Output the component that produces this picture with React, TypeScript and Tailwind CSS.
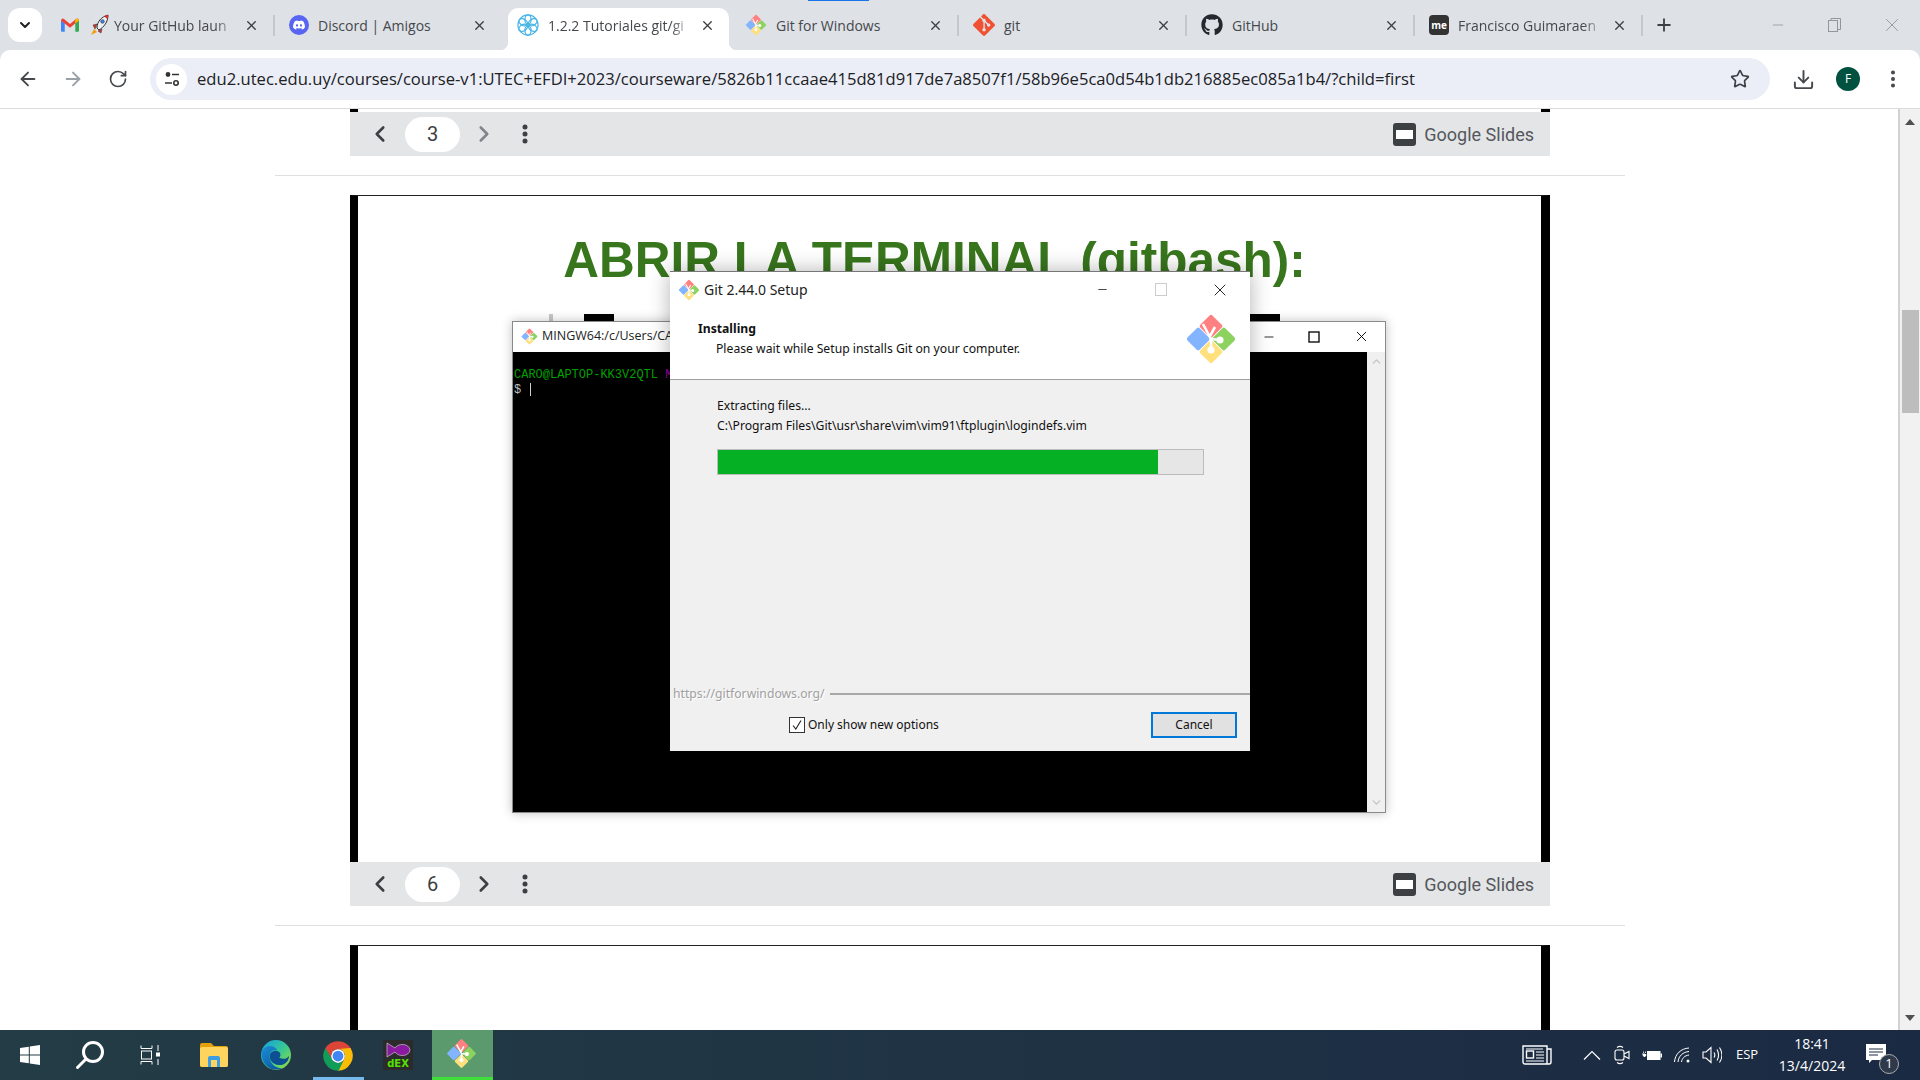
import React from 'react';
import { ArrowLeft, ArrowRight, ChevronDown, ChevronLeft, ChevronRight, ChevronUp, Download, EllipsisVertical, Minus, Plus, RotateCw, Star, X } from 'lucide-react';
import { FaDiscord, FaGithub } from 'react-icons/fa';
import { SiGit } from 'react-icons/si';

const GitLogo: React.FC<{ size: number }> = ({ size }) => (
  <svg width={size} height={size} viewBox="-26 -26 52 52" className="shrink-0">
    <rect x="-8.6" y="-8.6" width="17.2" height="17.2" rx="2" transform="translate(-12.8 0) rotate(45)" fill="#82b4ff" />
    <rect x="-8.6" y="-8.6" width="17.2" height="17.2" rx="2" transform="translate(0 -12.8) rotate(45)" fill="#ff8080" />
    <rect x="-8.6" y="-8.6" width="17.2" height="17.2" rx="2" transform="translate(12.8 0) rotate(45)" fill="#8cd25f" />
    <rect x="-8.6" y="-8.6" width="17.2" height="17.2" rx="2" transform="translate(0 12.8) rotate(45)" fill="#ffe07c" />
    <path d="M-8 -15 L0 0 M0 0 L0 11 M0 0 L9 1 M4 -12 L-1 -3" stroke="#fff" strokeWidth="2.6" fill="none" />
    <circle cx="0" cy="11" r="3.6" fill="#fff" />
    <circle cx="9" cy="1" r="3.6" fill="#fff" />
  </svg>
);

const GmailIcon = () => (
  <svg width="18" height="14" viewBox="0 0 24 18" className="shrink-0">
    <path d="M0 3 L5 6 V18 H1.5 A1.5 1.5 0 0 1 0 16.5Z" fill="#4285f4" />
    <path d="M24 3 L19 6 V18 H22.5 A1.5 1.5 0 0 0 24 16.5Z" fill="#34a853" />
    <path d="M0 3 A2.5 2.5 0 0 1 4 1 L12 7.5 L20 1 A2.5 2.5 0 0 1 24 3 L19 7 L12 12.5 L5 7Z" fill="#ea4335" />
    <path d="M19 2.8 L20 1 A2.5 2.5 0 0 1 24 3 L19 7Z" fill="#fbbc04" />
  </svg>
);

const RocketIcon = () => (
  <svg width="20" height="22" viewBox="0 0 20 22" className="shrink-0">
    <path d="M4 15 L1 21 L7 18Z" fill="#f59e0b" />
    <path d="M7 14 C7 8 11 3 18 1 C18 8 14 13 9 16Z" fill="#eef1f4" stroke="#333" strokeWidth="1" />
    <path d="M14 2 C15.5 1.5 17 1 18 1 C18 2.5 17.6 4 17.2 5Z" fill="#d93025" />
    <circle cx="12.5" cy="7.5" r="1.8" fill="#3b82f6" stroke="#333" strokeWidth="0.6" />
    <path d="M7 10 L3 11 L5 15Z M12 15 L11 19 L8 17Z" fill="#d93025" stroke="#333" strokeWidth="0.5" />
  </svg>
);

const SnowflakeIcon = () => (
  <svg width="22" height="22" viewBox="-12 -12 24 24" className="shrink-0">
    <circle r="11" fill="none" stroke="#45b4e6" strokeWidth="1.2" />
    {[0, 60, 120, 180, 240, 300].map(a => (
      <ellipse key={a} cx="0" cy="-6" rx="3.4" ry="5" transform={`rotate(${a})`} fill="none" stroke="#45b4e6" strokeWidth="1.4" />
    ))}
  </svg>
);

const ChromeIcon = () => (
  <svg width="30" height="30" viewBox="0 0 48 48">
    <path d="M45.05 13A24 24 0 0 0 2.95 13L14.47 29.5A11 11 0 0 1 24 13Z" fill="#db4437" />
    <path d="M45.05 13A24 24 0 0 0 2.95 13L14.47 29.5A11 11 0 0 1 24 13Z" fill="#fbbc05" transform="rotate(120 24 24)" />
    <path d="M45.05 13A24 24 0 0 0 2.95 13L14.47 29.5A11 11 0 0 1 24 13Z" fill="#0f9d58" transform="rotate(240 24 24)" />
    <circle cx="24" cy="24" r="11" fill="#fff" />
    <circle cx="24" cy="24" r="8.6" fill="#4285f4" />
  </svg>
);

const EdgeIcon = () => (
  <svg width="30" height="30" viewBox="0 0 48 48">
    <defs>
      <linearGradient id="edgeA" x1="0.2" y1="0" x2="0.9" y2="0.7">
        <stop offset="0" stopColor="#1ba8d8" />
        <stop offset="0.6" stopColor="#38c98f" />
        <stop offset="1" stopColor="#7ad65a" />
      </linearGradient>
      <linearGradient id="edgeB" x1="0" y1="0" x2="0.7" y2="1">
        <stop offset="0" stopColor="#1b8fd6" />
        <stop offset="1" stopColor="#0c59a4" />
      </linearGradient>
    </defs>
    <circle cx="24" cy="24" r="24" fill="url(#edgeA)" />
    <path d="M1 20 C4 8 20 6 26 16 C18 14 12 20 14 30 C16 40 26 46 34 45 C28 48 20 48 14 45 C5 40 0 30 1 20Z" fill="url(#edgeB)" />
    <path d="M14 26 C14 18 24 14 30 20 C32 23 31 27 29 28 C35 32 42 30 45 25 C44 36 36 41 28 40 C20 39 14 34 14 26Z" fill="#0c4f92" />
  </svg>
);

const GoogleSlidesBar: React.FC<{ page: number; atFirst?: boolean }> = ({ page, atFirst }) => (
  <div className="flex h-[44px] items-center bg-[#e4e5e7] font-['Roboto',sans-serif] text-[#3c4043]">
    <ChevronLeft size={26} strokeWidth={2.4} className="ml-[17px]" />
    <div className="ml-[12px] flex h-[35px] w-[55px] items-center justify-center rounded-full bg-white text-[20px]">{page}</div>
    <ChevronRight size={26} strokeWidth={2.4} className={atFirst ? 'ml-[11px] text-[#80868b]' : 'ml-[11px]'} />
    <svg width="20" height="24" viewBox="0 0 20 24" className="ml-[18px]" fill="#3c4043">
      <circle cx="10" cy="5" r="2.5" />
      <circle cx="10" cy="12" r="2.5" />
      <circle cx="10" cy="19" r="2.5" />
    </svg>
    <svg width="23" height="23" viewBox="0 0 23 23" className="ml-auto">
      <rect width="23" height="23" rx="3" fill="#3c4043" />
      <rect x="3" y="7" width="17" height="9" fill="#fff" />
    </svg>
    <span className="ml-[8px] mr-[16px] text-[18px] text-[#54575c]">Google Slides</span>
  </div>
);

const Separator = () => <div className="h-px bg-[#dfdfdf]" />;

const tabs: { icon: React.ReactNode; title: string; active?: boolean; fade?: boolean }[] = [
  { icon: <><GmailIcon /><span className="-mr-[5px] ml-[11px]"><RocketIcon /></span></>, title: 'Your GitHub laun', fade: true },
  { icon: <FaDiscord size={13} className="box-content shrink-0 rounded-full bg-[#5865f2] p-[3.5px] text-white" />, title: 'Discord | Amigos' },
  { icon: <SnowflakeIcon />, title: '1.2.2 Tutoriales git/gi', active: true, fade: true },
  { icon: <GitLogo size={22} />, title: 'Git for Windows' },
  { icon: <SiGit size={22} className="shrink-0 text-[#f05133]" />, title: 'git' },
  { icon: <FaGithub size={22} className="shrink-0 text-[#24292f]" />, title: 'GitHub' },
  {
    icon: (
      <span className="flex h-[20px] w-[20px] shrink-0 items-center justify-center rounded-[4px] bg-[#333] text-[10px] font-bold leading-none text-white">me</span>
    ),
    title: 'Francisco Guimaraen',
    fade: true,
  },
];

const BrowserTabs = () => (
  <div className="relative flex h-[50px] shrink-0 bg-[#dee1e6] font-['Open_Sans',sans-serif] text-[14px]">
    <div className="absolute left-[808px] top-0 h-px w-[61px] bg-[#1a73e8]" />
    <div className="ml-[8px] mt-[8px] flex h-[34px] w-[34px] items-center justify-center rounded-[12px] bg-white">
      <ChevronDown size={16} strokeWidth={3} className="text-[#222]" />
    </div>
    <div className="ml-[5px] flex">
      {tabs.map((tab, i) => (
        <div key={i} className="relative mt-[8px] flex h-[42px] w-[228px]">
          {tab.active && (
            <>
              <div className="absolute inset-y-0 left-[5px] right-[2px] rounded-t-[10px] bg-white" />
              <div className="absolute bottom-0 left-[-3px] h-[8px] w-[8px] bg-[radial-gradient(circle_at_0_0,transparent_8px,white_8.5px)]" />
              <div className="absolute bottom-0 right-[-6px] h-[8px] w-[8px] bg-[radial-gradient(circle_at_100%_0,transparent_8px,white_8.5px)]" />
            </>
          )}
          <div className="relative flex h-[34px] w-full items-center pl-[14px] pr-[16px]">
            {tab.icon}
            <span
              className={
                tab.fade
                  ? 'ml-[9px] min-w-0 flex-1 whitespace-nowrap text-[#45484c] [mask-image:linear-gradient(to_left,transparent,black_22px)]'
                  : 'ml-[9px] min-w-0 flex-1 whitespace-nowrap text-[#45484c]'
              }
            >
              {tab.title}
            </span>
            <X size={15} strokeWidth={2.2} className="ml-[7px] shrink-0 text-[#3c4043]" />
          </div>
          {i !== 1 && i !== 2 && <div className="absolute right-0 top-[7px] h-[21px] w-[2px] bg-[#c4c7cc]" />}
        </div>
      ))}
    </div>
    <div className="flex h-[34px] w-[41px] translate-y-[8px] items-center justify-center">
      <Plus size={20} strokeWidth={2.2} className="text-[#3c4043]" />
    </div>
    <div className="ml-auto flex h-[49px] text-[#93969b]">
      <div className="flex w-[57px] items-center justify-center"><Minus size={16} strokeWidth={1.2} /></div>
      <div className="flex w-[57px] items-center justify-center">
        <svg width="13" height="14" viewBox="0 0 13 14" fill="none" stroke="currentColor"><rect x="0.5" y="2.5" width="9" height="11" /><path d="M3 2.5V0.5H12.5V11.5H9.5" /></svg>
      </div>
      <div className="flex w-[57px] items-center justify-center"><X size={22} strokeWidth={1} /></div>
    </div>
  </div>
);

const Toolbar = () => (
  <div className="shrink-0 bg-[#dee1e6]">
    <div className="flex h-[59px] items-center rounded-t-[10px] border-b border-[#dadce0] bg-white pl-[5px] text-[#45484c]">
      <div className="flex w-[45px] justify-center"><ArrowLeft size={22} strokeWidth={2} /></div>
      <div className="flex w-[45px] justify-center text-[#9aa0a6]"><ArrowRight size={22} strokeWidth={2} /></div>
      <div className="flex w-[45px] justify-center"><RotateCw size={20} strokeWidth={2} /></div>
      <div className="ml-[10px] flex h-[42px] w-[1620px] items-center rounded-full bg-[#ebeef7]">
        <div className="ml-[6px] flex h-[31px] w-[31px] items-center justify-center rounded-full bg-white">
          <svg width="16" height="16" viewBox="0 0 16 16" fill="none" stroke="#333" strokeWidth="1.6">
            <circle cx="4" cy="3.5" r="1.6" fill="#333" />
            <path d="M8 3.5H15M1 12H8" />
            <circle cx="12" cy="12" r="2.2" />
          </svg>
        </div>
        <span className="ml-[10px] whitespace-nowrap font-['Open_Sans',sans-serif] text-[16.6px] text-[#202124]">
          edu2.utec.edu.uy/courses/course-v1:UTEC+EFDI+2023/courseware/5826b11ccaae415d81d917de7a8507f1/58b96e5ca0d54b1db216885ec085a1b4/?child=first
        </span>
        <Star size={20} strokeWidth={2} className="ml-auto mr-[20px] text-[#3c4043]" />
      </div>
      <div className="ml-[15px] flex w-[36px] justify-center"><Download size={23} strokeWidth={2} /></div>
      <div className="ml-[15px] flex h-[24px] w-[24px] items-center justify-center rounded-full bg-[#00513f] font-['Open_Sans',sans-serif] text-[12px] text-white">F</div>
      <EllipsisVertical size={22} strokeWidth={2.4} className="ml-[22px]" />
    </div>
  </div>
);

const TerminalWindow = () => (
  <div className="absolute left-[154px] top-[125px] flex h-[492px] w-[874px] flex-col border border-[#8a8a8a] bg-white shadow-[0_0_10px_rgba(0,0,0,0.25)]">
    <div className="flex h-[30px] shrink-0 items-center pb-[1px] pl-[8px] font-['Open_Sans',sans-serif] text-[12.5px] text-[#222]">
      <GitLogo size={17} />
      <span className="ml-[4px]">MINGW64:/c/Users/CARO</span>
      <Minus size={14} strokeWidth={1.4} className="ml-auto text-black" />
      <svg width="12" height="12" viewBox="0 0 12 12" className="ml-[32px]" fill="none" stroke="#111" strokeWidth="1.4"><rect x="1" y="1" width="10" height="10" /></svg>
      <X size={17} strokeWidth={1.3} className="ml-[33px] mr-[15px] text-black" />
    </div>
    <div className="flex min-h-0 flex-1">
      <div className="flex-1 bg-black pl-[1px] pt-[16px] font-['Liberation_Mono',monospace] text-[12px] leading-[15px]">
        <div className="whitespace-nowrap text-[#00a000]">CARO@LAPTOP-KK3V2QTL <span className="text-[#a000a0]">MINGW64</span></div>
        <div className="text-[#bfbfbf]">$ <span className="ml-[2px] inline-block h-[13px] w-px bg-[#cfcfcf] align-middle" /></div>
      </div>
      <div className="flex w-[18px] flex-col items-center justify-between bg-[#f0f0f0] py-[3px] text-[#c4c4c4]">
        <ChevronUp size={13} strokeWidth={2.5} />
        <ChevronDown size={13} strokeWidth={2.5} />
      </div>
    </div>
  </div>
);

const SetupDialog = () => (
  <div className="absolute left-[312px] top-[75px] flex h-[480px] w-[580px] flex-col border-t border-t-[#777] bg-[#f0f0f0] font-['Noto_Sans',sans-serif] text-[12.2px] text-[#111] shadow-[0_0_20px_rgba(0,0,0,0.3)]">
    <div className="h-[108px] shrink-0 border-b border-[#a0a0a0] bg-white">
      <div className="flex h-[35px] items-center pl-[8px] text-[14px]">
        <GitLogo size={22} />
        <span className="ml-[4px] text-[#222]">Git 2.44.0 Setup</span>
        <Minus size={13} strokeWidth={1.4} className="ml-auto" />
        <div className="ml-[46px] h-[13px] w-[12px] border border-[#ccc]" />
        <X size={20} strokeWidth={1.1} className="ml-[43px] mr-[20px]" />
      </div>
      <div className="flex">
        <div className="pl-[28px] pt-[13px]">
          <div className="font-bold leading-[18px]">Installing</div>
          <div className="ml-[18px] mt-[2px] leading-[18px]">Please wait while Setup installs Git on your computer.</div>
        </div>
        <div className="ml-auto mr-[13px] mt-[6px]"><GitLogo size={52} /></div>
      </div>
    </div>
    <div className="flex flex-1 flex-col pl-[47px]">
      <div className="mt-[17px] leading-[18px]">Extracting files...</div>
      <div className="mt-[2px] leading-[18px]">C:\Program Files\Git\usr\share\vim\vim91\ftplugin\logindefs.vim</div>
      <div className="mt-[14px] h-[26px] w-[487px] border border-[#bcbcbc] bg-[#e6e6e6]">
        <div className="h-full w-[440px] bg-[#06b025]" />
      </div>
    </div>
    <div className="flex h-[20px] shrink-0 items-center pl-[3px] text-[#a0a0a0]">
      <span className="whitespace-nowrap [text-shadow:1px_1px_0_#fff]">https://gitforwindows.org/</span>
      <div className="ml-[5px] h-[2px] flex-1 bg-[#a8a8a8]" />
    </div>
    <div className="flex h-[47px] shrink-0 items-center pb-[5px] pl-[119px] text-[12px]">
      <div className="flex h-[16px] w-[16px] items-center justify-center border border-[#333] bg-white">
        <svg width="12" height="12" viewBox="0 0 12 12" fill="none" stroke="#222" strokeWidth="1.1"><path d="M2 6.5 L4.8 10 L10 1.5" /></svg>
      </div>
      <span className="ml-[3px]">Only show new options</span>
      <div className="ml-auto mr-[13px] flex h-[26px] w-[86px] items-center justify-center border-2 border-[#0078d7] bg-[#e1e1e1]">Cancel</div>
    </div>
  </div>
);

const Slide = () => (
  <div className="relative h-[667px] border-x-[8px] border-t border-x-black border-r-[9px] border-t-[#222] bg-white">
    <h1 className="whitespace-nowrap pr-[30px] pt-[34px] text-center font-['Liberation_Sans',sans-serif] text-[49.5px] font-bold leading-[60px] text-[#38761d]">
      ABRIR LA TERMINAL (gitbash):
    </h1>
    <div className="absolute left-[191px] top-[118px] h-[7px] w-[4px] bg-[#c8c8c8]" />
    <div className="absolute left-[226px] top-[118px] h-[7px] w-[30px] bg-black" />
    <div className="absolute left-[892px] top-[118px] h-[7px] w-[30px] bg-black" />
    <TerminalWindow />
    <SetupDialog />
  </div>
);

const TaskCell: React.FC<{ className: string; children: React.ReactNode }> = ({ className, children }) => (
  <div className={`flex h-full items-center justify-center ${className}`}>{children}</div>
);

const Taskbar = () => (
  <div className="flex h-[50px] shrink-0 bg-[linear-gradient(90deg,#233c45_0%,#1b2a43_100%)] font-['Open_Sans',sans-serif] text-white">
    <TaskCell className="w-[60px]">
      <svg width="20" height="20" viewBox="0 0 20 20" fill="#fff"><path d="M0 3 L8.8 1.7 V9.4 H0Z M9.8 1.5 L20 0 V9.4 H9.8Z M0 10.4 H8.8 V18.2 L0 17Z M9.8 10.4 H20 V20 L9.8 18.5Z" /></svg>
    </TaskCell>
    <TaskCell className="w-[60px]">
      <svg width="30" height="30" viewBox="0 0 30 30" fill="none" stroke="#fff" strokeWidth="3"><circle cx="18" cy="12" r="9.5" /><path d="M11 19 L2.5 27.5" strokeLinecap="round" /></svg>
    </TaskCell>
    <TaskCell className="w-[60px]">
      <svg width="20" height="20" viewBox="0 0 20 20" fill="none" stroke="#fff" strokeWidth="1"><path d="M1 0.5V3.5H12V0.5 M1 19.5V16.5H12V19.5" /><rect x="1.5" y="6" width="10" height="8" /><path d="M18 0V6 M18 14V20" /><rect x="16.5" y="8" width="3" height="3" fill="#fff" /></svg>
    </TaskCell>
    <TaskCell className="w-[68px]">
      <svg width="28" height="24" viewBox="0 0 28 24">
        <path d="M0 2 A2 2 0 0 1 2 0 H11 L14 3 H26 A2 2 0 0 1 28 5 V22 A2 2 0 0 1 26 24 H2 A2 2 0 0 1 0 22Z" fill="#e3a008" />
        <rect y="4" width="28" height="20" rx="2" fill="#ffd45e" />
        <path d="M8 24 V15 A2 2 0 0 1 10 13 H18 A2 2 0 0 1 20 15 V24 H17 V17 H11 V24Z" fill="#3b9ee5" />
      </svg>
    </TaskCell>
    <TaskCell className="w-[56px]"><EdgeIcon /></TaskCell>
    <div className="ml-[9px] flex h-full w-[51px] flex-col items-center justify-end">
      <div className="mb-[6px] -translate-x-[1px]"><ChromeIcon /></div>
      <div className="h-[3px] w-full bg-[#76b9ed]" />
    </div>
    <TaskCell className="w-[68px]">
      <div className="flex h-[30px] w-[30px] flex-col items-center bg-[#2b2b2b]">
        <svg width="26" height="16" viewBox="0 0 26 16" className="mt-[2px]"><path d="M2 1 L10 6 C13 1 24 1 25 8 C24 15 13 15 10 10 L2 15Z" fill="#8a1aa0" stroke="#ddd" strokeWidth="0.6" /></svg>
        <span className="font-['DejaVu_Sans',sans-serif] text-[10px] font-bold leading-[11px] text-[#55e000]">dEX</span>
      </div>
    </TaskCell>
    <div className="flex h-full w-[61px] flex-col bg-[#5a9a6c]">
      <div className="flex flex-1 items-center justify-center pr-[2px]"><GitLogo size={31} /></div>
      <div className="h-[3px] w-full bg-[#3fdf3a]" />
    </div>

    <div className="ml-auto flex h-full items-center pr-[20px] text-[14px]">
      <TaskCell className="mr-[20px] w-[40px]">
        <svg width="30" height="20" viewBox="0 0 30 20" fill="none" stroke="#fff" strokeWidth="1.4"><path d="M1 1H25V19H3A2 2 0 0 1 1 17Z M25 4H29V17A2 2 0 0 1 27 19H25" /><rect x="4.5" y="6" width="7" height="7" /><path d="M4 4H21 M14 7H22 M14 10H22 M14 13H22 M4 16H22" strokeWidth="1" /></svg>
      </TaskCell>
      <TaskCell className="w-[30px]">
        <svg width="18" height="10" viewBox="0 0 18 10" fill="none" stroke="#fff" strokeWidth="1.2"><path d="M1 9.5L9 1.5L17 9.5" /></svg>
      </TaskCell>
      <TaskCell className="w-[30px]">
        <svg width="16" height="20" viewBox="0 0 16 20" fill="none" stroke="#fff" strokeWidth="1.1"><rect x="1" y="5" width="9" height="10" rx="2" /><path d="M10 9L15 6.5V13.5L10 11 M3 2.5C5 1 7 1 9 2.5 M3 17.5C5 19 7 19 9 17.5" /></svg>
      </TaskCell>
      <TaskCell className="w-[30px]">
        <svg width="20" height="12" viewBox="0 0 20 12" fill="none">
          <path d="M0 5H3 M1.5 2.5V4 M3.5 2.5V4" stroke="#fff" strokeWidth="0.8" />
          <path d="M0.8 5H4.2V6.5L3 8H2L0.8 6.5Z" fill="#fff" />
          <rect x="5.5" y="2.5" width="12.5" height="8" fill="#fff" stroke="#fff" strokeWidth="1" />
          <rect x="18.5" y="4.5" width="1.5" height="4" fill="#fff" />
        </svg>
      </TaskCell>
      <TaskCell className="w-[30px]">
        <svg width="16" height="16" viewBox="0 0 16 16" fill="none" stroke="#fff" strokeWidth="1"><path d="M0.5 15C1 7 7 1.5 15 1M4 15C4.5 9 9 5 15 4.5M7.5 15C8 11.5 10.5 8.5 15 8" /><circle cx="14" cy="14" r="1.5" fill="#fff" stroke="none" /></svg>
      </TaskCell>
      <TaskCell className="w-[30px]">
        <svg width="20" height="18" viewBox="0 0 20 18" fill="none" stroke="#fff" strokeWidth="1.1"><path d="M1 6H4L9 1.5V16.5L4 12H1Z M12 6.5C13 8 13 10 12 11.5 M15 3.5C17 7 17 11 15 14.5 M17.5 1.5C20.5 6 20.5 12 17.5 16.5" /></svg>
      </TaskCell>
      <TaskCell className="w-[40px] text-[13px]">ESP</TaskCell>
      <div className="ml-[5px] flex w-[80px] flex-col items-center text-[14px] leading-[22px]">
        <span>18:41</span>
        <span>13/4/2024</span>
      </div>
      <div className="relative ml-[3px] flex h-full w-[45px] items-center justify-center">
        <svg width="20" height="20" viewBox="0 0 20 20" className="-ml-[4px] -mt-[2px]" fill="#fff">
          <path d="M0 0H20V16H6L3 19V16H0Z" />
          <path d="M3 5H17M3 8H17M3 11H12" stroke="#1b2a43" strokeWidth="1" />
        </svg>
        <div className="absolute bottom-[6px] right-[1px] flex h-[20px] w-[20px] items-center justify-center rounded-full border border-[#aaa] bg-[#2e3a4c] text-[13px]">1</div>
      </div>
    </div>
  </div>
);

const Scrollbar = () => (
  <div className="flex w-[22px] shrink-0 flex-col items-center border-l-2 border-[#d2d2d2] bg-[#f1f1f1]">
    <svg width="10" height="6" viewBox="0 0 10 6" className="mt-[10px]" fill="#505050"><path d="M5 0L10 6H0Z" /></svg>
    <div className="mt-[185px] h-[103px] w-[17px] bg-[#bdbdbd]" />
    <svg width="10" height="6" viewBox="0 0 10 6" className="mb-[9px] mt-auto" fill="#505050"><path d="M5 6L10 0H0Z" /></svg>
  </div>
);

const App: React.FC = () => (
  <div className="flex h-[1080px] w-[1920px] flex-col overflow-hidden bg-white">
    <BrowserTabs />
    <Toolbar />
    <div className="flex min-h-0 flex-1">
      <div className="min-w-0 flex-1 overflow-hidden">
        <div className="ml-[275px] w-[1350px]">
          <div className="mx-[75px]">
            <div className="h-[3px] border-x-[8px] border-r-[9px] border-black" />
            <GoogleSlidesBar page={3} atFirst />
          </div>
          <div className="pb-[19px] pt-[19px]"><Separator /></div>
          <div className="mx-[75px]">
            <Slide />
            <GoogleSlidesBar page={6} />
          </div>
          <div className="pb-[19px] pt-[19px]"><Separator /></div>
          <div className="mx-[75px]">
            <div className="h-[100px] border-x-[8px] border-r-[9px] border-t border-x-black border-t-[#222]" />
          </div>
        </div>
      </div>
      <Scrollbar />
    </div>
    <Taskbar />
  </div>
);

export default App;
